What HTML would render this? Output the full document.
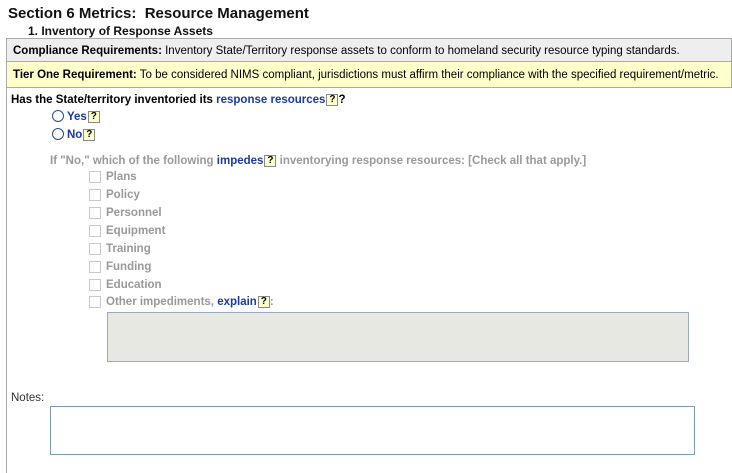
<!DOCTYPE html>
<html><head><style>
*{margin:0;padding:0;box-sizing:border-box}
body{width:732px;height:473px;background:#fff;font-family:"Liberation Sans",Arial,sans-serif;font-size:11.5px;color:#000;position:relative;overflow:hidden}
.a{position:absolute;white-space:nowrap}
.h{background:#ffffcc;border:1px solid #888;color:#000;font-size:10px;line-height:10px;display:inline-block;width:12px;height:12px;text-align:center;font-weight:bold;vertical-align:text-top;margin-left:1px}
.blue{color:#1a3aa0}
.g{color:#999;font-weight:bold}
.cb{position:absolute;width:12px;height:12px;border:1px solid #c8c8c8;background:#fff}
.rad{display:inline-block;width:12px;height:12px;border:1px solid #2a4a9a;border-radius:50%;vertical-align:-2px;margin-right:3px;background:#fff}
</style></head><body>
<div class="a" style="left:8px;top:5px;font-size:15px;font-weight:bold;color:#111">Section 6 Metrics:&nbsp; Resource Management</div>
<div class="a" style="left:28px;top:24px;font-size:12px;font-weight:bold;color:#111">1. Inventory of Response Assets</div>
<div class="a" style="left:6px;top:38px;width:1px;height:435px;background:#aaa"></div>
<div class="a" style="left:6px;top:38px;width:726px;height:24px;background:#eee;border:1px solid #aaa;padding:6px 0 0 6px"><b>Compliance Requirements:</b> Inventory State/Territory response assets to conform to homeland security resource typing standards.</div>
<div class="a" style="left:6px;top:62px;width:726px;height:26px;background:#ffffcc;border:1px solid #aaa;border-top:none;padding:7px 0 0 6px"><b>Tier One Requirement:</b> To be considered NIMS compliant, jurisdictions must affirm their compliance with the specified requirement/metric.</div>
<div class="a" style="left:11px;top:94px;font-weight:bold">Has the State/territory inventoried its <span class="blue">response resources</span><span class="h">?</span>?</div>
<div class="a" style="left:52px;top:110px;font-weight:bold" ><span class="rad"></span><span class="blue">Yes</span><span class="h">?</span></div>
<div class="a" style="left:52px;top:128px;font-weight:bold" ><span class="rad"></span><span class="blue">No</span><span class="h">?</span></div>
<div class="a g" style="left:50px;top:155px">If "No," which of the following <span class="blue">impedes</span><span class="h">?</span> inventorying response resources: [Check all that apply.]</div>
<div class="cb" style="left:89px;top:171px"></div><div class="a g" style="left:106px;top:171px">Plans</div>
<div class="cb" style="left:89px;top:189px"></div><div class="a g" style="left:106px;top:189px">Policy</div>
<div class="cb" style="left:89px;top:207px"></div><div class="a g" style="left:106px;top:207px">Personnel</div>
<div class="cb" style="left:89px;top:225px"></div><div class="a g" style="left:106px;top:225px">Equipment</div>
<div class="cb" style="left:89px;top:243px"></div><div class="a g" style="left:106px;top:243px">Training</div>
<div class="cb" style="left:89px;top:261px"></div><div class="a g" style="left:106px;top:261px">Funding</div>
<div class="cb" style="left:89px;top:279px"></div><div class="a g" style="left:106px;top:279px">Education</div>
<div class="cb" style="left:89px;top:296px"></div><div class="a g" style="left:106px;top:296px">Other impediments, <span class="blue">explain</span><span class="h">?</span>:</div>
<div class="a" style="left:107px;top:312px;width:582px;height:50px;background:#e8e8e2;border:1px solid #9aaabb"></div>
<div class="a" style="left:11px;top:392px;color:#333">Notes:</div>
<div class="a" style="left:50px;top:406px;width:645px;height:49px;border:1px solid #7a9cc0;background:#fff"></div>
</body></html>
